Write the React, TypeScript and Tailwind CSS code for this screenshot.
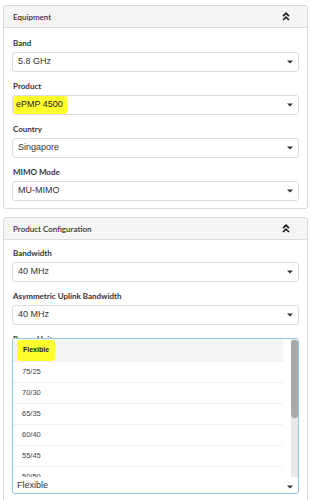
import React from "react";

const sans = { fontFamily: '"Liberation Sans", Arial, sans-serif' };
const lato = { fontFamily: 'Lato, "Open Sans", sans-serif' };

function DoubleUp() {
  return (
    <svg width="8" height="9" viewBox="0 0 8 9" className="block">
      <polyline points="1,4.2 4,1.3 7,4.2" fill="none" stroke="#222" strokeWidth="1.7" />
      <polyline points="1,8 4,5.1 7,8" fill="none" stroke="#222" strokeWidth="1.7" />
    </svg>
  );
}

function Caret() {
  return (
    <svg width="6" height="4" viewBox="0 0 6 4" className="block">
      <polygon points="0,0.5 6,0.5 3,3.5" fill="#333" />
    </svg>
  );
}

function Header({ title }: { title: string }) {
  return (
    <div className="h-[22px] bg-[#f5f5f5] border-b border-[#dcdcdc] flex items-center justify-between pl-[9px] pr-[17px] rounded-t-[3px]">
      <span className="text-[8px] font-semibold text-[#333]" style={lato}>
        {title}
      </span>
      <DoubleUp />
    </div>
  );
}

function Field({ label, value, highlight, last }: { label: string; value: string; highlight?: boolean; last?: boolean }) {
  return (
    <div className={last ? "" : "mb-[9px]"}>
      <div className="h-[10px] leading-[10px] mb-[4px] pl-[1px] text-[8px] font-bold text-[#333]" style={lato}>
        {label}
      </div>
      <div className="h-[20px] border border-[#dedede] rounded-[3px] flex items-stretch justify-between pr-[5px] bg-white">
        {highlight ? (
          <span className="flex items-center bg-[#ffff2e] rounded-[3px] pl-[3px] pr-[4px] text-[9px] text-[#222]" style={sans}>
            {value}
          </span>
        ) : (
          <span className="flex items-center pl-[5px] text-[9px] text-[#333]" style={sans}>
            {value}
          </span>
        )}
        <span className="flex items-center">
          <Caret />
        </span>
      </div>
    </div>
  );
}

const items = ["75/25", "70/30", "65/35", "60/40", "55/45", "50/50"];

function OpenSelect() {
  return (
    <div>
      <div className="h-[10px] leading-[10px] pl-[1px] text-[8px] font-bold text-[#333]" style={lato}>
        Range Units
      </div>
      <div className="-mt-[6px] relative border border-[#8fcbe0] rounded-[3px] bg-white">
        <div className="h-[138px] overflow-hidden flex">
          <div className="flex-1 pr-[8px]">
            <div className="h-[22px] bg-[#f4f4f4] flex items-center pl-[4px]">
              <span className="h-[21px] flex items-center bg-[#ffff2e] rounded-[3px] px-[6px] text-[7px] font-bold text-[#222]" style={sans}>
                Flexible
              </span>
            </div>
            {items.map((it) => (
              <div key={it} className="h-[21px] border-t border-[#f1f1f1] flex items-center pl-[9px] text-[7.5px] text-[#444]" style={sans}>
                {it}
              </div>
            ))}
          </div>
          <div className="w-[7px] pt-[1px] pb-[1px] bg-[#e8e8e8] flex flex-col">
            <div className="h-[78px] bg-[#a9a9a9] rounded-[3px]" />
          </div>
        </div>
        <div className="h-[16px] flex items-center justify-between pl-[4px] pr-[5px]">
          <span className="text-[9px] leading-[10px] text-[#333]" style={sans}>
            Flexible
          </span>
          <span className="pt-[3px]">
            <Caret />
          </span>
        </div>
      </div>
    </div>
  );
}

export default function App() {
  return (
    <div className="w-[311px] h-[500px] overflow-hidden bg-white pt-[5px] px-[3px]">
      <div className="border border-[#d9d9d9] rounded-[3px] bg-white">
        <Header title="Equipment" />
        <div className="px-[8px] pt-[10px] pb-[7px]">
          <Field label="Band" value="5.8 GHz" />
          <Field label="Product" value="ePMP 4500" highlight />
          <Field label="Country" value="Singapore" />
          <Field label="MIMO Mode" value="MU-MIMO" last />
        </div>
      </div>
      <div className="mt-[8px] border border-[#d9d9d9] rounded-[3px] bg-white">
        <Header title="Product Configuration" />
        <div className="px-[8px] pt-[8px]">
          <Field label="Bandwidth" value="40 MHz" />
          <Field label="Asymmetric Uplink Bandwidth" value="40 MHz" />
          <OpenSelect />
          <div className="h-[20px]" />
        </div>
      </div>
    </div>
  );
}
